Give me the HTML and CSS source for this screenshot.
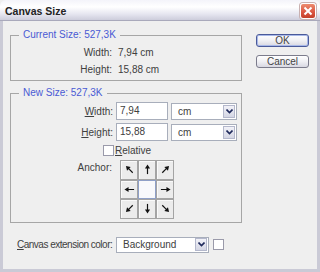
FILE: index.html
```html
<!DOCTYPE html>
<html lang="en">
<head>
    <meta charset="UTF-8">
    <title>Canvas Size</title>
    <link rel="stylesheet" href="styles.css">
</head>
<body>
    <div class="window">
        <div class="titlebar">
            <span class="title">Canvas Size</span>
            <span class="close">
                <svg width="10" height="10" viewBox="0 0 10 10"><path d="M1.5 1.5 L8.5 8.5 M8.5 1.5 L1.5 8.5" stroke="#fff" stroke-width="2"/></svg>
            </span>
        </div>
        <div class="frame">
            <div class="main">
                <div class="left">
                    <fieldset class="group current">
                        <legend>Current Size: 527,3K</legend>
                        <div class="row">
                            <span class="lbl">Width:</span>
                            <span class="val">7,94 cm</span>
                        </div>
                        <div class="row">
                            <span class="lbl">Height:</span>
                            <span class="val">15,88 cm</span>
                        </div>
                    </fieldset>

                    <fieldset class="group newsize">
                        <legend>New Size: 527,3K</legend>
                        <div class="frow">
                            <span class="lbl"><u>W</u>idth:</span>
                            <span class="input">7,94</span>
                            <span class="select unit"><span class="opt">cm</span><span class="drop"><svg width="7" height="5" viewBox="0 0 7 5"><path d="M0.5 0.5 L3.5 3.5 L6.5 0.5" stroke="#1f2a5c" stroke-width="1.6" fill="none"/></svg></span></span>
                        </div>
                        <div class="frow">
                            <span class="lbl"><u>H</u>eight:</span>
                            <span class="input">15,88</span>
                            <span class="select unit"><span class="opt">cm</span><span class="drop"><svg width="7" height="5" viewBox="0 0 7 5"><path d="M0.5 0.5 L3.5 3.5 L6.5 0.5" stroke="#1f2a5c" stroke-width="1.6" fill="none"/></svg></span></span>
                        </div>
                        <div class="check-row">
                            <span class="checkbox"></span>
                            <span><u>R</u>elative</span>
                        </div>
                        <div class="anchor-row">
                            <span class="lbl">Anchor:</span>
                            <div class="anchor">
                                <span class="cell"><svg class="arr r-nw" viewBox="0 0 12 12"><path d="M6 11 V4" stroke="#111" stroke-width="1.3"/><polygon points="6,0.5 3.2,5 8.8,5" fill="#111"/></svg></span>
                                <span class="cell"><svg class="arr" viewBox="0 0 12 12"><path d="M6 11 V4" stroke="#111" stroke-width="1.3"/><polygon points="6,0.5 3.2,5 8.8,5" fill="#111"/></svg></span>
                                <span class="cell"><svg class="arr r-ne" viewBox="0 0 12 12"><path d="M6 11 V4" stroke="#111" stroke-width="1.3"/><polygon points="6,0.5 3.2,5 8.8,5" fill="#111"/></svg></span>
                                <span class="cell"><svg class="arr r-w" viewBox="0 0 12 12"><path d="M6 11 V4" stroke="#111" stroke-width="1.3"/><polygon points="6,0.5 3.2,5 8.8,5" fill="#111"/></svg></span>
                                <span class="cell center"></span>
                                <span class="cell"><svg class="arr r-e" viewBox="0 0 12 12"><path d="M6 11 V4" stroke="#111" stroke-width="1.3"/><polygon points="6,0.5 3.2,5 8.8,5" fill="#111"/></svg></span>
                                <span class="cell"><svg class="arr r-sw" viewBox="0 0 12 12"><path d="M6 11 V4" stroke="#111" stroke-width="1.3"/><polygon points="6,0.5 3.2,5 8.8,5" fill="#111"/></svg></span>
                                <span class="cell"><svg class="arr r-s" viewBox="0 0 12 12"><path d="M6 11 V4" stroke="#111" stroke-width="1.3"/><polygon points="6,0.5 3.2,5 8.8,5" fill="#111"/></svg></span>
                                <span class="cell"><svg class="arr r-se" viewBox="0 0 12 12"><path d="M6 11 V4" stroke="#111" stroke-width="1.3"/><polygon points="6,0.5 3.2,5 8.8,5" fill="#111"/></svg></span>
                            </div>
                        </div>
                    </fieldset>
                </div>
                <div class="right">
                    <span class="btn default">OK</span>
                    <span class="btn">Cancel</span>
                </div>
            </div>
            <div class="ext-row">
                <span class="ext-lbl"><u>C</u>anvas extension color:</span>
                <span class="select ext"><span class="opt">Background</span><span class="drop"><svg width="7" height="5" viewBox="0 0 7 5"><path d="M0.5 0.5 L3.5 3.5 L6.5 0.5" stroke="#1f2a5c" stroke-width="1.6" fill="none"/></svg></span></span>
                <span class="swatch"></span>
            </div>
        </div>
    </div>
</body>
</html>
```

FILE: styles.css
```css
*{
    margin: 0;
    padding: 0;
    box-sizing: border-box;
}
body{
    font-family: "Liberation Sans", Arial, sans-serif;
    font-size: 10px;
    color: #404040;
    background: #fff;
}
.window{
    width: 320px;
    height: 272px;
    display: flex;
    flex-direction: column;
    background: #efefef;
}
.titlebar{
    height: 21px;
    display: flex;
    align-items: center;
    justify-content: space-between;
    padding: 1px 4px 0 5px;
    background: linear-gradient(#f4f4fa, #ffffff 35%, #e6e6f0 70%, #cdcddb);
    border-bottom: 1px solid #a9a9bb;
    border-radius: 6px 6px 0 0;
}
.title{
    font-weight: bold;
    font-size: 10.5px;
    color: #222;
}
.close{
    width: 16px;
    height: 16px;
    display: flex;
    align-items: center;
    justify-content: center;
    border: 1px solid #fff;
    border-radius: 3px;
    background: linear-gradient(#ec8c70, #da5440 60%, #c4402a);
    box-shadow: 0 0 0 1px #c8b0b0;
}
.frame{
    flex: 1;
    border: 3px solid #cacad6;
    border-top: 0;
    padding: 8px 0 0 7px;
}
.main{
    display: flex;
}
.left{
    width: 232px;
}
.group{
    border: 1px solid #a6a6a6;
    padding: 3px 0 2px;
}
.group legend{
    margin-left: 8px;
    padding: 0 4px;
    line-height: 12px;
    color: #4a5ad4;
}
.row{
    display: flex;
    line-height: 17px;
    gap: 6px;
}
.lbl{
    width: 101px;
    text-align: right;
}
.newsize{
    margin-top: 6px;
    padding: 3px 0 3px;
}
.frow{
    display: flex;
    align-items: center;
    gap: 3px;
    height: 18px;
    margin-bottom: 3px;
}
.frow .lbl{
    width: 102px;
}
.input{
    width: 52px;
    height: 18px;
    border: 1px solid #a8aebb;
    background: #fff;
    padding-left: 3px;
    line-height: 16px;
}
.select{
    height: 17px;
    border: 1px solid #a8aebb;
    background: #fff;
    display: flex;
    align-items: center;
    justify-content: space-between;
    padding: 1px;
}
.opt{
    padding-left: 5px;
}
.unit{
    width: 66px;
}
.drop{
    width: 12px;
    height: 13px;
    display: flex;
    align-items: center;
    justify-content: center;
    border: 1px solid #b4b8cc;
    background: linear-gradient(#f2f2f8, #d4d6e4);
}
.check-row{
    display: flex;
    align-items: center;
    gap: 1px;
    height: 12px;
    margin-top: 3px;
    padding-left: 92px;
}
.checkbox{
    width: 11px;
    height: 11px;
    border: 1px solid #9a9aaa;
    background: #fff;
}
.anchor-row{
    display: flex;
    gap: 8px;
    margin-top: 4px;
}
.anchor-row .lbl{
    padding-top: 3px;
    line-height: 10px;
}
.anchor{
    display: grid;
    grid-template-columns: repeat(3, 18px);
    grid-template-rows: repeat(3, 19.5px);
}
.cell{
    display: flex;
    align-items: center;
    justify-content: center;
    border: 1px solid #a4a4a4;
    background: #ececec;
    box-shadow: inset 1px 1px 0 #fafafa;
}
.cell.center{
    background: #f8f9fc;
    border-color: #8fa0c8;
}
.arr{
    width: 11px;
    height: 11px;
}
.r-ne{ transform: rotate(45deg); }
.r-e{ transform: rotate(90deg); }
.r-se{ transform: rotate(135deg); }
.r-s{ transform: rotate(180deg); }
.r-sw{ transform: rotate(225deg); }
.r-w{ transform: rotate(270deg); }
.r-nw{ transform: rotate(315deg); }
.right{
    margin-left: 14px;
    padding-top: 5px;
    display: flex;
    flex-direction: column;
    gap: 8px;
}
.btn{
    width: 53px;
    height: 13px;
    display: flex;
    align-items: center;
    justify-content: center;
    border: 1px solid #7c7c8c;
    border-radius: 3px;
    background: linear-gradient(#ffffff, #f0f0f4 50%, #d8d8e2);
    color: #444;
}
.btn.default{
    border-color: #4a5a9a;
    box-shadow: inset 0 0 0 1px #a8b8e8;
}
.ext-row{
    display: flex;
    align-items: center;
    margin-top: 14px;
    padding-left: 7px;
}
.ext-lbl{
    width: 96px;
    letter-spacing: -0.5px;
    white-space: nowrap;
}
.ext{
    width: 93px;
    height: 16px;
    margin-left: 3px;
}
.swatch{
    width: 11px;
    height: 11px;
    margin-left: 4px;
    border: 1px solid #9a9aaa;
    background: #fff;
}
```
